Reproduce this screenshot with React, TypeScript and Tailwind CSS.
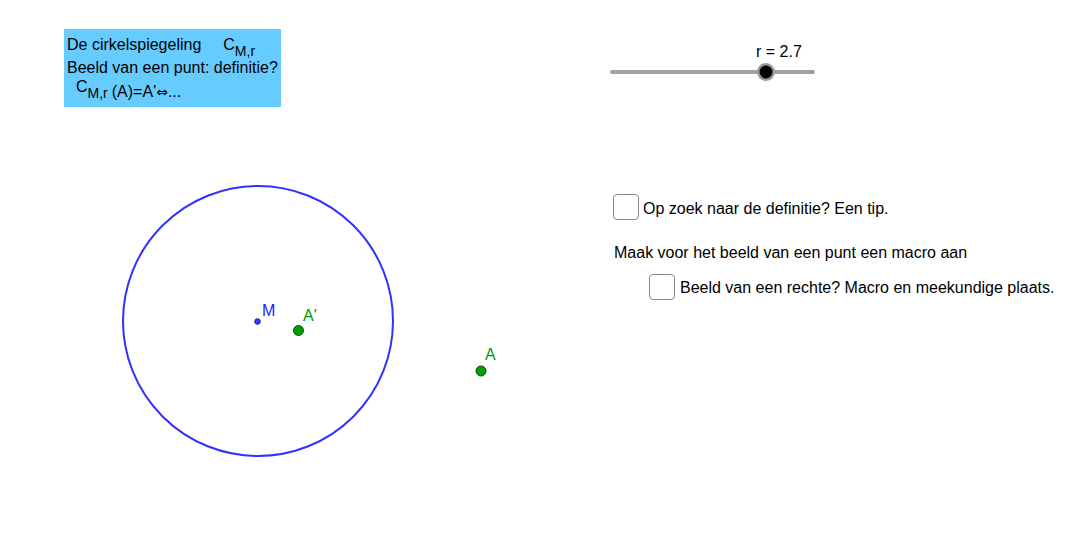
import React from "react";

const font = { fontFamily: '"Liberation Sans", Arial, sans-serif' };

function Label({ x, baseline, children, className = "" }: { x: number; baseline: number; children: React.ReactNode; className?: string }) {
  return (
    <div
      className={`absolute whitespace-nowrap text-[16px] leading-[18px] ${className}`}
      style={{ left: x, top: baseline - 14 }}
    >
      {children}
    </div>
  );
}

function Checkbox() {
  return <div className="h-[26px] w-[26px] shrink-0 rounded-[4px] border border-[#8a8a8a] bg-white" />;
}

function CMr() {
  return (
    <span className="whitespace-nowrap">
      C<span className="align-[-6px] text-[14px]">M,r</span>
    </span>
  );
}

export default function App() {
  return (
    <div className="relative h-[551px] w-[1073px] overflow-hidden bg-white text-black" style={font}>
      {/* geometry canvas */}
      <svg className="absolute left-0 top-0" width="1073" height="551">
        <circle cx="258" cy="321" r="135" fill="none" stroke="#3232ff" strokeWidth="2" />
        {/* slider */}
        <line x1="612" y1="72" x2="813" y2="72" stroke="#a0a0a0" strokeWidth="4" strokeLinecap="round" />
        <circle cx="766" cy="72" r="9" fill="#9a9a9a" />
        <circle cx="766" cy="72" r="6.5" fill="#000" />
        {/* points */}
        <circle cx="257.5" cy="321.5" r="2.8" fill="#3c3cff" stroke="#1a1a66" strokeWidth="1" />
        <circle cx="298.5" cy="330.5" r="5" fill="#00a000" stroke="#1d3d1d" strokeWidth="1" />
        <circle cx="481" cy="371" r="5" fill="#00a000" stroke="#1d3d1d" strokeWidth="1" />
      </svg>

      {/* point labels */}
      <Label x={262} baseline={316} className="text-[#2020ff]">M</Label>
      <Label x={303} baseline={321} className="text-[#009900]">A'</Label>
      <Label x={485} baseline={360} className="text-[#009900]">A</Label>

      {/* slider label */}
      <Label x={756} baseline={57}>r = 2.7</Label>

      {/* blue text box */}
      <div className="absolute left-[64px] top-[29px] flex h-[78px] w-[217px] flex-col bg-[#66ccff] pl-[3px] pt-[7px] text-[16px] leading-[18px]">
        <div className="flex h-[23px] items-start gap-[22px] whitespace-nowrap">
          <span>De cirkelspiegeling</span>
          <CMr />
        </div>
        <div className="h-[24px] whitespace-nowrap">Beeld van een punt: definitie?</div>
        <div className="flex items-start whitespace-nowrap pl-[9px]">
          <span className="-mt-[5px]">
            <CMr />
          </span>
          <span className="ml-[4px]">
            (A)=A'<span className="text-[14px]" style={{ fontFamily: '"DejaVu Sans", sans-serif' }}>⇔</span>...
          </span>
        </div>
      </div>

      {/* checkbox panel */}
      <div className="absolute left-[613px] top-[194px] flex flex-col text-[16px] leading-[18px]">
        <div className="flex items-start gap-[4px]">
          <Checkbox />
          <span className="mt-[6px] whitespace-nowrap">Op zoek naar de definitie? Een tip.</span>
        </div>
        <div className="ml-[1px] mt-[24px] whitespace-nowrap">Maak voor het beeld van een punt een macro aan</div>
        <div className="ml-[36px] mt-[12px] flex items-start gap-[5px]">
          <Checkbox />
          <span className="mt-[5px] whitespace-nowrap">Beeld van een rechte? Macro en meekundige plaats.</span>
        </div>
      </div>
    </div>
  );
}
